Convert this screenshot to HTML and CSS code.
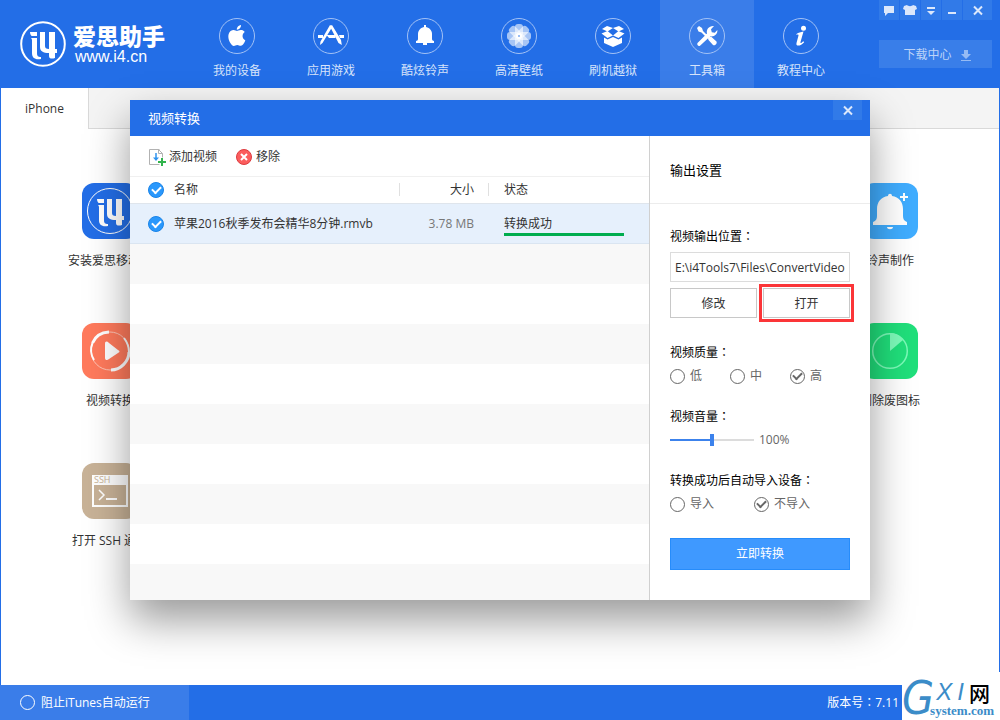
FILE: index.html
```html
<!DOCTYPE html>
<html lang="zh-CN">
<head>
<meta charset="utf-8">
<title>爱思助手</title>
<link rel="stylesheet" href="styles.css">
</head>
<body>
<svg class="defs" aria-hidden="true">
  <symbol id="mark" viewBox="0 0 46 46">
    <circle cx="23" cy="23" r="21.8" fill="none" stroke="currentColor" stroke-width="2"/>
    <path fill="currentColor" d="M10 11h7v4h-5c-1 0-2-2-2-4zM11 17h6v15c0 3 1 4 4 4v2c-6 1-9-1-9-6V20c0-1 0-2-1-3zM20 11h5v14c0 2 1 3 4 3V11h6v17h2v4h-2v5c-3 1-6 1-6-2v-3c-6 0-9-2-9-6z"/>
  </symbol>
</svg>

<header class="topbar">
  <div class="brand">
    <svg class="brand-mark"><use href="#mark"/></svg>
    <div class="brand-text">
      <strong class="brand-name">爱思助手</strong>
      <span class="brand-url">www.i4.cn</span>
    </div>
  </div>
  <nav class="nav">
    <a class="nav-item" href="#">
      <svg class="nav-icon" viewBox="0 0 36 36"><circle class="ring" cx="18" cy="18" r="17.5"/><path transform="translate(7.4 7) scale(.87)" d="M12.152 6.896c-.948 0-2.415-1.078-3.96-1.04-2.04.027-3.91 1.183-4.961 3.014-2.117 3.675-.546 9.103 1.519 12.09 1.013 1.454 2.208 3.09 3.792 3.039 1.52-.065 2.09-.987 3.935-.987 1.831 0 2.35.987 3.96.948 1.637-.026 2.676-1.48 3.676-2.948 1.156-1.688 1.636-3.325 1.662-3.415-.039-.013-3.182-1.221-3.22-4.857-.026-3.04 2.48-4.494 2.597-4.559-1.429-2.09-3.623-2.324-4.39-2.376-2-.156-3.675 1.09-4.61 1.09zM15.53 3.83c.843-1.012 1.4-2.427 1.245-3.83-1.207.052-2.662.805-3.532 1.818-.78.896-1.454 2.338-1.273 3.714 1.338.104 2.715-.688 3.559-1.701"/></svg>
      <span>我的设备</span>
    </a>
    <a class="nav-item" href="#">
      <svg class="nav-icon" viewBox="0 0 36 36"><circle class="ring" cx="18" cy="18" r="17.5"/><path d="M5 17h5v3H5zM13.500 17h9v3h-6.500zM26 17h5v3h-4z"/><path d="M17 7l2.500 1.500L9.500 25 7 27l.5-3.500zM17 8.500l2-1.500 9 15 .8 5-3.300-2z"/></svg>
      <span>应用游戏</span>
    </a>
    <a class="nav-item" href="#">
      <svg class="nav-icon" viewBox="0 0 36 36"><circle class="ring" cx="18" cy="18" r="17.5"/><path d="M17 7h2v2c4 .8 6 4 6 7v5c0 1 1 2 2 2v2h-7v2h-4v-2H9v-2c1 0 2-1 2-2v-5c0-3 2-6.200 6-7z"/></svg>
      <span>酷炫铃声</span>
    </a>
    <a class="nav-item" href="#">
      <svg class="nav-icon" viewBox="0 0 36 36"><circle class="ring" cx="18" cy="18" r="17.5"/>
        <g fill-opacity=".6"><rect x="14" y="6" width="8" height="12" rx="3"/><rect x="14" y="6" width="8" height="12" rx="3" transform="rotate(45 18 18)"/><rect x="14" y="6" width="8" height="12" rx="3" transform="rotate(90 18 18)"/><rect x="14" y="6" width="8" height="12" rx="3" transform="rotate(135 18 18)"/><rect x="14" y="6" width="8" height="12" rx="3" transform="rotate(180 18 18)"/><rect x="14" y="6" width="8" height="12" rx="3" transform="rotate(225 18 18)"/><rect x="14" y="6" width="8" height="12" rx="3" transform="rotate(270 18 18)"/><rect x="14" y="6" width="8" height="12" rx="3" transform="rotate(315 18 18)"/></g><circle cx="18" cy="18" r="3" fill="#fff"/><circle cx="18" cy="18" r="1" fill="#7ba9f1"/></svg>
      <span>高清壁纸</span>
    </a>
    <a class="nav-item" href="#">
      <svg class="nav-icon" viewBox="0 0 36 36"><circle class="ring" cx="18" cy="18" r="17.5"/><path d="M12 8l6 2-5.500 3.500L7 11zM24 8l-6 2 5.500 3.500L29 11zM6.500 15.500L12.500 13l5.500 4.500-5.500 2.500zM29.500 15.500L23.500 13 18 17.500l5.500 2.500zM9 19.500l3.500 2L18 19l5.500 2.500 3.500-2V25l-9 4-9-4z"/></svg>
      <span>刷机越狱</span>
    </a>
    <a class="nav-item nav-item-active" href="#">
      <svg class="nav-icon" viewBox="0 0 36 36"><circle class="ring" cx="18" cy="18" r="17.5"/><path d="M8 10l2-2 3 2 1 3 4 4-1.500 1.500-4-4-3-1zM19 20.500l2-2 1.500.5 5 4.500c1 2-1.500 4.500-3.500 3.500L19.500 22zM8.500 25l9.500-9.500c-1-4 2-8 7-7.500l-3 3.200.8 3 3 .6L28.300 12c.7 4-3 7-7 6.300L11 27.800c-1.500 1-3.500-1-2.500-2.800z"/></svg>
      <span>工具箱</span>
    </a>
    <a class="nav-item" href="#">
      <svg class="nav-icon" viewBox="0 0 36 36"><circle class="ring" cx="18" cy="18" r="17.5"/><circle cx="20.500" cy="10.300" r="2.500"/><path d="M13.500 16c2-1.500 4-2 7-2.500l-3 10.500c-.3 1.400.2 1.600 2.800-.8l.9 1c-2.700 3.300-8.700 5.300-7.700.8l2-7.500c.2-1.200-.7-1-2-.5z"/></svg>
      <span>教程中心</span>
    </a>
  </nav>
  <div class="topbar-side">
    <div class="window-buttons">
      <button class="win-button" type="button" aria-label="反馈"><svg viewBox="0 0 20 20"><path d="M5 6h10v7H9l-3 3v-3H5z"/></svg></button>
      <button class="win-button" type="button" aria-label="皮肤"><svg viewBox="0 0 20 20"><path d="M7 5c1 1.500 5 1.500 6 0l3 1 1 3-2 1v5H5v-5L3 9l1-3z"/></svg></button>
      <button class="win-button" type="button" aria-label="菜单"><svg viewBox="0 0 20 20"><path d="M6 7h8v2H6zM6 11h8l-4 4z"/></svg></button>
      <button class="win-button" type="button" aria-label="最小化"><svg viewBox="0 0 20 20"><path d="M6 12h8v2H6z"/></svg></button>
      <button class="win-button win-close" type="button" aria-label="关闭"><svg viewBox="0 0 20 20"><path class="cross" d="M6 6.500l8 8M14 6.500l-8 8"/></svg></button>
    </div>
    <button class="download" type="button">下载中心
      <svg class="download-icon" viewBox="0 0 12 12"><path d="M4 1h4v4h3L6 10 1 5h3zM1 11h10v1H1z"/></svg>
    </button>
  </div>
</header>

<main class="workspace">
  <div class="tabs"><a class="tab" href="#">iPhone</a></div>
  <div class="tools">
    <a class="tool" href="#">
      <svg class="tool-icon" viewBox="0 0 56 56"><rect width="56" height="56" rx="12" fill="#236ee7"/><circle cx="28" cy="28" r="22.500" fill="none" stroke="#fff"/><path fill="#fff" transform="translate(5 5)" d="M10 11h7v4h-5c-1 0-2-2-2-4zM11 17h6v15c0 3 1 4 4 4v2c-6 1-9-1-9-6V20c0-1 0-2-1-3zM20 11h5v14c0 2 1 3 4 3V11h6v17h2v4h-2v5c-3 1-6 1-6-2v-3c-6 0-9-2-9-6z"/></svg>
      <span>安装爱思移动端</span>
    </a>
    <a class="tool" href="#">
      <svg class="tool-icon" viewBox="0 0 56 56"><rect width="56" height="56" rx="12" fill="#40adff"/><path fill="#fff" d="M26 13c0-3 4-3 4 0 7 1 11 6 11 13v7c0 3 1 5 4 6v3H11v-3c3-1 4-3 4-6v-7c0-7 4-12 11-13zM25 44h6c0 3-6 3-6 0zM41 10h2v3h3v2h-3v3h-2v-3h-3v-2h3z"/></svg>
      <span>铃声制作</span>
    </a>
    <a class="tool" href="#">
      <svg class="tool-icon" viewBox="0 0 56 56"><rect width="56" height="56" rx="12" fill="#ff7a5c"/><circle cx="28" cy="28" r="19" fill="none" stroke="#ffc4b5"/><path fill="none" stroke="#fff" stroke-width="3" d="M27 9C18 9.500 13 14 10.500 20M47 29c0 9-8 18-18 18"/><path fill="none" stroke="#fff" stroke-width="2" d="M10.500 20C8 26 9 32 12 37M42 15c3 4 5 8 5 14"/><path fill="#fff" d="M23 21c0-3 2-3 4-1l9 7c2 1 2 2 0 3l-9 6c-2 2-4 1-4-1z"/></svg>
      <span>视频转换</span>
    </a>
    <a class="tool" href="#">
      <svg class="tool-icon" viewBox="0 0 56 56"><rect width="56" height="56" rx="12" fill="#20df7b"/><circle cx="28" cy="28" r="17.300" fill="none" stroke="#7dfab9" stroke-width="1.500"/><path fill="#7dfab9" d="M28 28V10c5 0 10 2 13 7z"/></svg>
      <span>删除废图标</span>
    </a>
    <a class="tool" href="#">
      <svg class="tool-icon" viewBox="0 0 56 56"><rect width="56" height="56" rx="12" fill="#c8b297"/><path fill="#fff" fill-rule="evenodd" d="M10 12h36v32H10zM12 22v20h32V22z"/><path fill="none" stroke="#fff" stroke-width="1.500" d="M17 27l5 5-5 5"/><path fill="#fff" d="M24 35h11v2H24z"/><text class="ssh-caption" x="12" y="20">SSH</text></svg>
      <span>打开 SSH 通道</span>
    </a>
  </div>
</main>

<footer class="statusbar">
  <label class="itunes"><input class="ring-check" type="checkbox">阻止iTunes自动运行</label>
  <span class="version">版本号<span class="colon" lang="zh-Hant">：</span>7.11</span>
</footer>

<div class="watermark">
  <span class="wm-g">G</span>
  <div class="wm-words">
    <div class="wm-top"><span>X</span><span>I</span><b class="wm-net">网</b></div>
    <span class="wm-site">system.com</span>
  </div>
</div>

<section class="dialog" role="dialog" aria-labelledby="dialog-title">
  <div class="dialog-head">
    <h1 class="dialog-title" id="dialog-title">视频转换</h1>
    <button class="win-button win-close" type="button" aria-label="关闭窗口"><svg viewBox="0 0 20 20"><path class="cross" d="M6 6.500l8 8M14 6.500l-8 8"/></svg></button>
  </div>
  <div class="dialog-body">
    <div class="files">
      <div class="toolbar">
        <button class="tool-button" type="button"><svg class="tb-icon" viewBox="0 0 18 18"><path fill="#fff" stroke="#b2b2b2" d="M11.500 1.500H1.500v15h13v-11h-4v-4l4 4"/><path fill="none" stroke="#2f93ee" stroke-width="1.500" d="M8 5v7"/><path fill="#2f93ee" d="M5 9.500h6l-3 3.500z"/><path stroke="#fff" stroke-width="4" d="M13.500 9.500v8M9 14h9"/><path stroke="#31b44c" stroke-width="2" d="M14 10v8M10 14h8"/></svg>添加视频</button>
        <button class="tool-button" type="button"><svg class="tb-icon" viewBox="0 0 18 18"><circle cx="9" cy="9" r="7.500" fill="#fb5d5d" stroke="#dd3b3f"/><path stroke="#fff" stroke-width="2" d="M6 6l6 6M12 6l-6 6"/></svg>移除</button>
      </div>
      <table class="file-table">
        <colgroup><col class="col-name"><col class="col-size"><col></colgroup>
        <thead>
          <tr>
            <th><label class="file-name"><input class="blue-check" type="checkbox" checked>名称</label></th>
            <th class="size">大小</th>
            <th class="state">状态</th>
          </tr>
        </thead>
        <tbody>
          <tr>
            <td><label class="file-name"><input class="blue-check" type="checkbox" checked>苹果2016秋季发布会精华8分钟.rmvb</label></td>
            <td class="size">3.78 MB</td>
            <td class="state"><div class="progress-text">转换成功</div><div class="progress"></div></td>
          </tr>
        </tbody>
      </table>
      <div class="empty-rows"></div>
    </div>
    <form class="settings">
      <h2 class="settings-title">输出设置</h2>
      <div class="settings-body">
        <div class="group">
          <label class="caption" for="path">视频输出位置<span class="colon" lang="zh-Hant">：</span></label>
          <input class="path" id="path" type="text" value="E:\i4Tools7\Files\ConvertVideo">
          <div class="path-actions">
            <button class="plain-button" type="button">修改</button>
            <button class="plain-button highlighted" type="button">打开</button>
          </div>
        </div>
        <fieldset class="group">
          <legend class="caption">视频质量<span class="colon" lang="zh-Hant">：</span></legend>
          <div class="choices">
            <label class="choice choice-short"><input class="ring-check" type="radio" name="quality">低</label>
            <label class="choice choice-short"><input class="ring-check" type="radio" name="quality">中</label>
            <label class="choice choice-short"><input class="ring-check" type="radio" name="quality" checked>高</label>
          </div>
        </fieldset>
        <div class="group">
          <label class="caption" for="volume">视频音量<span class="colon" lang="zh-Hant">：</span></label>
          <div class="volume-row"><input class="volume" id="volume" type="range" min="0" max="200" value="100"><output for="volume">100%</output></div>
        </div>
        <fieldset class="group">
          <legend class="caption">转换成功后自动导入设备<span class="colon" lang="zh-Hant">：</span></legend>
          <div class="choices">
            <label class="choice choice-long"><input class="ring-check" type="radio" name="import">导入</label>
            <label class="choice"><input class="ring-check" type="radio" name="import" checked>不导入</label>
          </div>
        </fieldset>
        <button class="convert" type="button">立即转换</button>
      </div>
    </form>
  </div>
</section>
</body>
</html>
```
FILE: styles.css
```css
* {
  box-sizing: border-box;
}

body {
  margin: 0;
  min-height: 100vh;
  display: flex;
  flex-direction: column;
  position: relative;
  background: #fff;
  color: #333;
  font: 12px/20px "Open Sans", "Noto Sans CJK SC", sans-serif;
}

button,
input {
  font: inherit;
  color: inherit;
  margin: 0;
}

button {
  border: 0;
  padding: 0;
}

a {
  color: inherit;
  text-decoration: none;
}

.defs {
  position: absolute;
  width: 0;
  height: 0;
}

.colon {
  font-family: "Noto Sans CJK TC", sans-serif;
  line-height: 1;
}

/* Top bar */
.topbar {
  display: flex;
  height: 88px;
  padding-right: 8px;
  background: #236ee7;
  color: #fff;
}

.brand {
  display: flex;
  align-items: center;
  gap: 7px;
  width: 190px;
  padding-left: 20px;
}

.brand-mark {
  width: 46px;
  height: 46px;
}

.brand-text {
  display: flex;
  flex-direction: column;
  padding-top: 2px;
}

.brand-name {
  font-size: 23px;
  font-weight: 900;
  line-height: 24px;
}

.brand-url {
  padding-left: 2px;
  font-family: "Liberation Sans", Arial, sans-serif;
  font-size: 16px;
  line-height: 18px;
}

.nav {
  display: flex;
}

.nav-item {
  display: flex;
  flex-direction: column;
  align-items: center;
  gap: 7px;
  width: 94px;
  padding-top: 18px;
  color: #d7e4fb;
}

.nav-item-active {
  background: #3a7de9;
}

.nav-icon {
  width: 36px;
  height: 36px;
  fill: #fff;
}

.ring {
  fill: none;
  stroke: #a3c2f5;
}

.topbar-side {
  display: flex;
  flex-direction: column;
  gap: 20px;
  width: 113px;
  margin-left: auto;
}

.window-buttons {
  display: flex;
  gap: 1px;
}

.win-button {
  flex: 1;
  display: flex;
  justify-content: center;
  height: 20px;
  background: #317ae8;
}

.win-button svg {
  width: 20px;
  height: 20px;
  fill: #dce8fb;
}

.win-close {
  flex: none;
  width: 29px;
}

.cross {
  stroke: #dce8fb;
  stroke-width: 2;
}

.download {
  display: flex;
  align-items: center;
  justify-content: center;
  gap: 8px;
  height: 28px;
  padding: 2px 0 0 4px;
  background: #397ee9;
  color: #bdd4f8;
}

.download-icon {
  width: 12px;
  height: 12px;
  fill: #96bbf4;
}

/* Workspace */
.workspace {
  flex: 1;
  border: solid #236ee7;
  border-width: 0 1px;
}

.tabs {
  height: 41px;
  background: #f4f4f4;
  border-bottom: 1px solid #d9d9d9;
}

.tab {
  display: block;
  width: 88px;
  height: 41px;
  border-right: 1px solid #d9d9d9;
  background: #fff;
  line-height: 41px;
  text-align: center;
}

.tools {
  display: grid;
  grid-template-columns: 100px 100px;
  grid-auto-rows: 140px;
  justify-content: space-between;
  padding: 54px 59px 0;
}

.tool {
  display: flex;
  flex-direction: column;
  align-items: center;
  gap: 12px;
}

.tool-icon {
  width: 56px;
  height: 56px;
}

.ssh-caption {
  fill: #c8b297;
  font-size: 9px;
}

/* Status bar */
.statusbar {
  display: flex;
  justify-content: space-between;
  height: 35px;
  padding-right: 101px;
  background: #236ee7;
  color: #fff;
  line-height: 35px;
}

.itunes {
  display: flex;
  align-items: center;
  gap: 6px;
  width: 189px;
  padding-left: 20px;
  background: #3a7de9;
}

.watermark {
  position: absolute;
  right: 0;
  bottom: 0;
  display: flex;
  height: 48px;
  padding-right: 6px;
  background: #fff;
  color: #3b8cc8;
}

.wm-g {
  width: 28px;
  padding-top: 4px;
  font: italic 46px/44px "Liberation Sans Narrow", "DejaVu Sans Condensed", sans-serif;
}

.wm-words {
  display: flex;
  flex-direction: column;
  padding-top: 8px;
}

.wm-top {
  display: flex;
  align-items: center;
  justify-content: flex-end;
  gap: 5px;
  padding-right: 4px;
  font: italic 24px/24px "Liberation Sans", Arial, sans-serif;
}

.wm-net {
  font: 500 21px/24px "Noto Sans CJK SC", sans-serif;
  color: #000;
}

.wm-site {
  font: bold 13px/14px "Liberation Serif", "Times New Roman", serif;
}

/* Dialog */
.dialog {
  position: absolute;
  top: 100px;
  left: 50%;
  transform: translateX(-50%);
  display: flex;
  flex-direction: column;
  width: 740px;
  background: #fff;
  box-shadow: 0 20px 40px rgba(0, 0, 0, 0.4);
}

.dialog-head {
  display: flex;
  align-items: flex-start;
  justify-content: space-between;
  padding: 0 8px 0 18px;
  background: #236ee7;
  color: #fff;
}

.dialog-title {
  margin: 0;
  font-size: 13px;
  font-weight: 400;
  line-height: 36px;
}

.dialog-body {
  display: flex;
}

.files {
  flex: 1;
  display: flex;
  flex-direction: column;
}

.toolbar {
  display: flex;
  gap: 18px;
  height: 41px;
  padding: 1px 0 0 18px;
  border-bottom: 1px solid #f0f0f0;
}

.tool-button {
  display: flex;
  align-items: center;
  gap: 3px;
  background: none;
}

.tb-icon {
  width: 18px;
  height: 18px;
  fill: none;
}

.file-table {
  width: 100%;
  table-layout: fixed;
  border-collapse: separate;
  border-spacing: 0;
}

.col-name {
  width: 270px;
}

.col-size {
  width: 89px;
}

.file-table th {
  height: 27px;
  padding: 0;
  font-weight: 400;
  text-align: left;
  background: linear-gradient(#e0e0e0, #e0e0e0) right 6px / 1px 13px no-repeat;
  border-bottom: 1px solid #dfe5ec;
}

.file-table th:last-child {
  background: none;
}

.file-table td {
  height: 40px;
  padding: 0;
  background: #e6f0fc;
  border-bottom: 1px solid #dae5f1;
}

.file-name {
  display: flex;
  align-items: center;
  gap: 10px;
  padding-left: 18px;
}

.file-table .size {
  padding-right: 15px;
  text-align: right;
}

td.size {
  color: #777;
}

.file-table .state {
  padding-left: 15px;
}

.progress-text {
  padding-top: 4px;
  line-height: 18px;
}

.progress {
  width: 120px;
  height: 3px;
  background: #00ad4e;
}

.empty-rows {
  flex: 1;
  background: repeating-linear-gradient(#f8f8f8 0 40px, #fff 40px 80px);
}

.blue-check,
.ring-check {
  appearance: none;
  flex: none;
  display: grid;
  place-items: center;
  border-radius: 50%;
}

.blue-check {
  width: 16px;
  height: 16px;
  border: 1px solid #1b84e8;
  background: #2a98fc;
  color: #fff;
}

.ring-check {
  width: 15px;
  height: 15px;
  border: 1px solid currentColor;
}

.blue-check:checked::before,
.ring-check:checked::before {
  content: "";
  width: 7px;
  height: 4px;
  margin-bottom: 2px;
  border: solid currentColor;
  border-width: 0 0 2px 2px;
  transform: rotate(-45deg);
}

/* Output settings */
.settings {
  width: 221px;
  border-left: 1px solid #d0d0d0;
  color: #666;
}

.settings-title {
  height: 68px;
  margin: 0;
  padding-left: 20px;
  border-bottom: 1px solid #ececec;
  color: #000;
  font-size: 13px;
  font-weight: 400;
  line-height: 68px;
}

.settings-body {
  display: flex;
  flex-direction: column;
  gap: 20px;
  padding: 22px 20px 30px;
}

.group {
  min-width: 0;
  margin: 0;
  padding: 0;
  border: 0;
}

.caption {
  display: block;
  height: 20px;
  padding: 0;
  color: #000;
  line-height: 22px;
}

.path {
  display: block;
  width: 100%;
  height: 30px;
  margin: 6px 0;
  padding: 0 0 0 4px;
  border: 1px solid #dcdcdc;
  background: #fff;
  color: #333;
}

.path-actions {
  display: flex;
  gap: 6px;
  padding-bottom: 4px;
}

.plain-button {
  flex: 1;
  height: 30px;
  padding-top: 1px;
  border: 1px solid #c8c8c8;
  background: #fff;
  color: #333;
}

.highlighted {
  outline: 3px solid #fb3538;
  outline-offset: 1px;
}

.choices {
  display: flex;
  height: 20px;
  margin-top: 4px;
}

.choice {
  display: flex;
  align-items: center;
  gap: 5px;
}

.choice-short {
  width: 60px;
}

.choice-long {
  width: 84px;
}

.volume-row {
  display: flex;
  align-items: center;
  gap: 5px;
  height: 20px;
  margin-top: 4px;
}

.volume {
  appearance: none;
  width: 84px;
  height: 12px;
  background: linear-gradient(90deg, #3c82ec 50%, #dcdcdc 50%) center / 100% 2px no-repeat;
}

.volume::-webkit-slider-thumb {
  appearance: none;
  width: 4px;
  height: 12px;
  background: #3c82ec;
}

.convert {
  height: 32px;
  margin-top: 4px;
  border: 1px solid #268cfb;
  background: #3f99ff;
  color: #fff;
}
```
